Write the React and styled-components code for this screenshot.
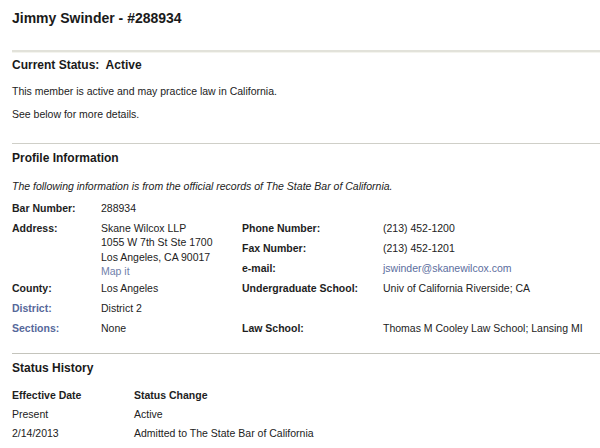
import React from "react";
import styled, { createGlobalStyle } from "styled-components";

const Global = createGlobalStyle`
  html, body { margin: 0; padding: 0; background: #ffffff; }
  body { font-family: "Liberation Sans", Arial, sans-serif; color: #1c1c1c; }
`;

const Page = styled.div`
  width: 600px;
  height: 448px;
  overflow: hidden;
  padding-left: 12px;
  box-sizing: border-box;
`;

const Title = styled.h1`
  margin: 10px 0 0;
  font-size: 14px;
  line-height: 16px;
  font-weight: bold;
  color: #1a1a1a;
`;

const Divider = styled.hr`
  border: 0;
  margin: ${(p) => p.$top}px 0 0;
  height: ${(p) => (p.$thick ? 2 : 1)}px;
  background: ${(p) => p.$color};
  border-bottom: ${(p) => (p.$thick ? "1px solid #f4f4ee" : "0")};
`;

const Heading = styled.h2`
  margin: ${(p) => p.$top}px 0 0;
  font-size: 12px;
  line-height: 14px;
  font-weight: bold;
  color: #1a1a1a;
`;

const Text = styled.p`
  margin: ${(p) => p.$top}px 0 0;
  font-size: 10.5px;
  line-height: 14px;
  font-style: ${(p) => (p.$italic ? "italic" : "normal")};
  color: #222;
`;

const InfoGrid = styled.div`
  margin-top: 5px;
  display: grid;
  grid-template-columns: 89px 141px 141px 1fr;
  grid-template-rows: repeat(7, 20px);
  font-size: 10.5px;
  line-height: 14px;
`;

const Label = styled.div`
  font-weight: bold;
  color: ${(p) => (p.$link ? "#56689a" : "#1e1e1e")};
  padding-top: 3px;
  grid-column: ${(p) => p.$col};
  grid-row: ${(p) => p.$row};
`;

const Value = styled.div`
  color: #222;
  padding-top: 3px;
  grid-column: ${(p) => p.$col};
  grid-row: ${(p) => p.$row};
  line-height: ${(p) => (p.$tight ? "14.3px" : "14px")};
`;

const Link = styled.span`
  color: ${(p) => (p.$light ? "#7080aa" : "#5b6d9e")};
`;

const HistoryTable = styled.div`
  margin-top: 13px;
  display: grid;
  grid-template-columns: 122px 1fr;
  grid-auto-rows: 19px;
  font-size: 10.5px;
  line-height: 14px;
`;

const HistHead = styled.div`
  font-weight: bold;
  color: #1e1e1e;
`;

const HistCell = styled.div`
  color: #222;
`;

export default function App() {
  return (
    <>
      <Global />
      <Page>
        <Title>Jimmy Swinder - #288934</Title>
        <Divider $thick $top={24} $color="#e2e2da" />
        <Heading $top={5}>Current Status:&nbsp; Active</Heading>
        <Text $top={12}>This member is active and may practice law in California.</Text>
        <Text $top={9}>See below for more details.</Text>
        <Divider $top={22} $color="#cfcfc8" />
        <Heading $top={7}>Profile Information</Heading>
        <Text $top={14} $italic>
          The following information is from the official records of The State Bar of California.
        </Text>
        <InfoGrid>
          <Label $col="1" $row="1">Bar Number:</Label>
          <Value $col="2" $row="1">288934</Value>

          <Label $col="1" $row="2">Address:</Label>
          <Value $col="2" $row="2 / span 3" $tight>
            Skane Wilcox LLP
            <br />
            1055 W 7th St Ste 1700
            <br />
            Los Angeles, CA 90017
            <br />
            <Link $light>Map it</Link>
          </Value>
          <Label $col="3" $row="2">Phone Number:</Label>
          <Value $col="4" $row="2">(213) 452-1200</Value>
          <Label $col="3" $row="3">Fax Number:</Label>
          <Value $col="4" $row="3">(213) 452-1201</Value>
          <Label $col="3" $row="4">e-mail:</Label>
          <Value $col="4" $row="4">
            <Link>jswinder@skanewilcox.com</Link>
          </Value>

          <Label $col="1" $row="5">County:</Label>
          <Value $col="2" $row="5">Los Angeles</Value>
          <Label $col="3" $row="5">Undergraduate School:</Label>
          <Value $col="4" $row="5">Univ of California Riverside; CA</Value>

          <Label $col="1" $row="6" $link>District:</Label>
          <Value $col="2" $row="6">District 2</Value>

          <Label $col="1" $row="7" $link>Sections:</Label>
          <Value $col="2" $row="7">None</Value>
          <Label $col="3" $row="7">Law School:</Label>
          <Value $col="4" $row="7">Thomas M Cooley Law School; Lansing MI</Value>
        </InfoGrid>
        <Divider $top={15} $color="#c4c4bc" />
        <Heading $top={7}>Status History</Heading>
        <HistoryTable>
          <HistHead>Effective Date</HistHead>
          <HistHead>Status Change</HistHead>
          <HistCell>Present</HistCell>
          <HistCell>Active</HistCell>
          <HistCell>2/14/2013</HistCell>
          <HistCell>Admitted to The State Bar of California</HistCell>
        </HistoryTable>
      </Page>
    </>
  );
}
